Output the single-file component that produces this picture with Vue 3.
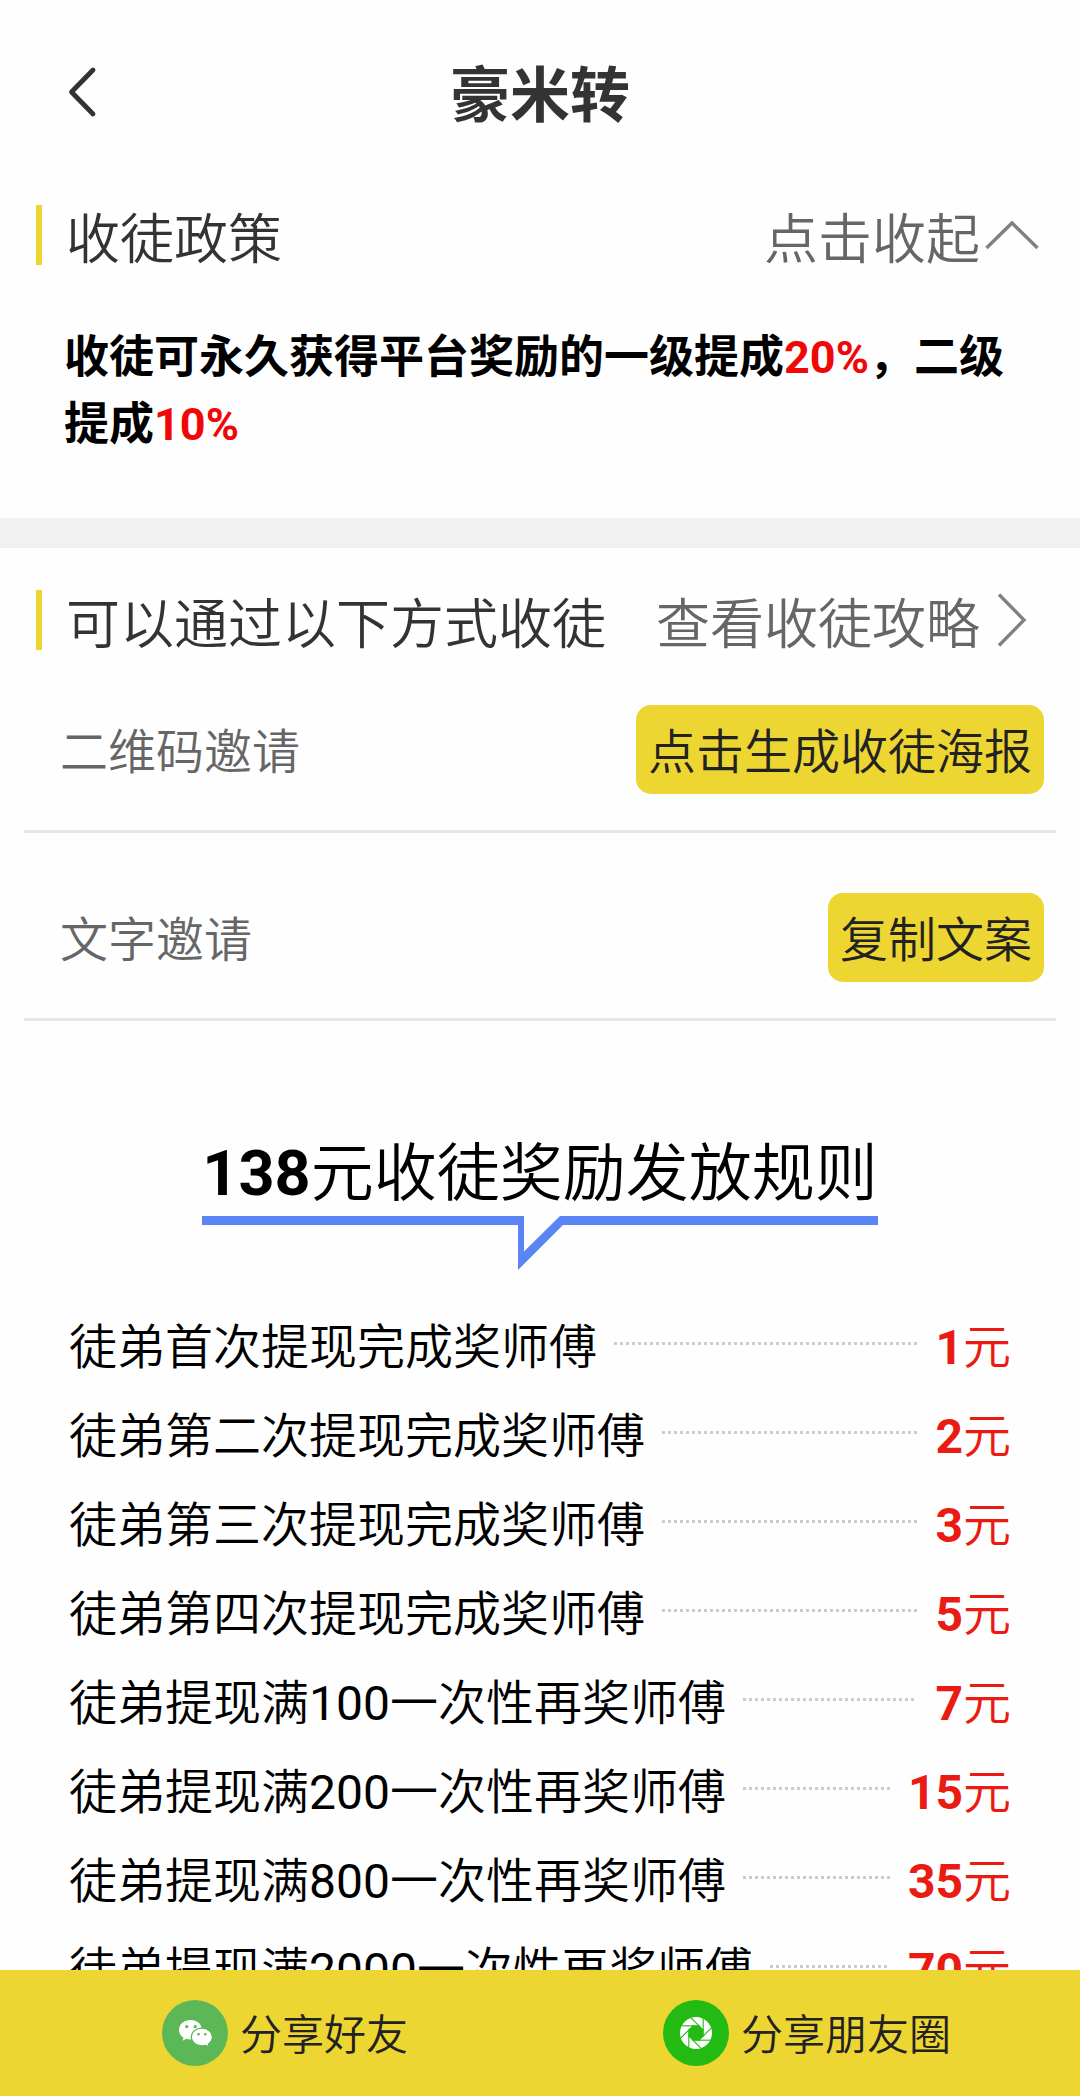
<template>
  <div class="page" lang="zh-CN">
    <main class="content">
      <header class="navbar">
        <svg class="back" viewBox="0 0 30 52" fill="none" stroke="#333" stroke-width="4.8" stroke-linecap="round" stroke-linejoin="round">
          <path d="M26 4 L4.500 26 L26 48" />
        </svg>
        <h1>豪米转</h1>
      </header>

      <section class="policy">
        <div class="section-head">
          <h2>收徒政策</h2>
          <div class="more">
            <span>点击收起</span>
            <svg class="arrow-up" viewBox="0 0 54 30" fill="none" stroke="#808080" stroke-width="3.4">
              <path d="M1.5 28 L27 3 L52.5 28" />
            </svg>
          </div>
        </div>
        <p class="policy-text">收徒可永久获得平台奖励的一级提成<em>20%</em>，二级提成<em>10%</em></p>
      </section>

      <div class="divider"></div>

      <section class="ways">
        <div class="section-head">
          <h2>可以通过以下方式收徒</h2>
          <div class="more">
            <span>查看收徒攻略</span>
            <svg class="arrow-right" viewBox="0 0 30 54" fill="none" stroke="#808080" stroke-width="3.4">
              <path d="M2 1.5 L27 27 L2 52.5" />
            </svg>
          </div>
        </div>
        <div v-for="way in ways" :key="way.label" class="way">
          <span class="way-label">{{ way.label }}</span>
          <button class="way-btn">{{ way.action }}</button>
        </div>
      </section>

      <section class="rules">
        <h3><b>138</b>元收徒奖励发放规则</h3>
        <svg class="underline" viewBox="0 0 676 54" fill="#5b84f5">
          <path d="M0 0 H322 V35.5 L358 0 H676 V9 H361 L316 54 V9 H0 Z" />
        </svg>
        <ul>
          <li v-for="(rule, index) in rules" :key="index">
            <span>{{ rule.text }}<span v-if="rule.limit" class="limit">{{ rule.limit }}</span>{{ rule.rest }}</span>
            <i class="dots"></i>
            <span class="reward"><b>{{ rule.amount }}</b>元</span>
          </li>
        </ul>
      </section>
    </main>

    <footer class="share-bar">
      <div class="share friend">
        <svg class="share-icon" viewBox="0 0 66 66">
          <circle cx="33" cy="33" r="33" fill="#5cb856" />
          <path fill="#fff" d="M28.5 20 C22 20 17 24.200 17 30 C17 33.200 18.700 35.800 21.400 37.600 L20.700 40.800 L24.400 38.800 C25.700 39.200 27 39.400 28.500 39.400 C35 39.400 40 35.500 40 30 C40 24.200 35 20 28.500 20 Z" />
          <path fill="#fff" stroke="#5cb856" stroke-width="1.200" d="M39.800 28.200 C34 28.200 29.300 32 29.300 37 C29.300 42 34 45.800 39.800 45.800 C41.200 45.800 42.500 45.600 43.700 45.200 L47.100 47.200 L46.300 44 C48.800 42.300 50.300 39.900 50.300 37 C50.300 32 45.600 28.200 39.800 28.200 Z" />
          <g fill="#5cb856">
            <circle cx="24.700" cy="26.600" r="1.600" />
            <circle cx="33.200" cy="26.600" r="1.600" />
            <circle cx="36.500" cy="34.300" r="1.300" />
            <circle cx="43.300" cy="34.300" r="1.300" />
          </g>
        </svg>
        <span>分享好友</span>
      </div>
      <div class="share moments">
        <svg class="share-icon" viewBox="0 0 66 66">
          <circle cx="33" cy="33" r="33" fill="#22ba13" />
          <circle cx="33" cy="33" r="16" fill="#fff" />
          <path fill="#22ba13" d="M30 25.800 H36 L40.200 30 V36 L36 40.200 H30 L25.800 36 V30 Z" />
          <!-- aperture blades -->
          <g stroke="#22ba13" stroke-width="1.100">
            <line v-for="n in 8" :key="n" x1="40.200" y1="36.500" x2="40.200" y2="18.500" :transform="`rotate(${n * 45} 33 33)`" />
          </g>
        </svg>
        <span>分享朋友圈</span>
      </div>
    </footer>
  </div>
</template>

<script setup>
const ways = [
  { label: '二维码邀请', action: '点击生成收徒海报' },
  { label: '文字邀请', action: '复制文案' }
]

const rules = [
  { text: '徒弟首次提现完成奖师傅', amount: 1 },
  { text: '徒弟第二次提现完成奖师傅', amount: 2 },
  { text: '徒弟第三次提现完成奖师傅', amount: 3 },
  { text: '徒弟第四次提现完成奖师傅', amount: 5 },
  { text: '徒弟提现满', limit: 100, rest: '一次性再奖师傅', amount: 7 },
  { text: '徒弟提现满', limit: 200, rest: '一次性再奖师傅', amount: 15 },
  { text: '徒弟提现满', limit: 800, rest: '一次性再奖师傅', amount: 35 },
  { text: '徒弟提现满', limit: 2000, rest: '一次性再奖师傅', amount: 70 }
]
</script>

<style>
body {
  margin: 0;
  background: #fefefe;
}
</style>

<style scoped>
.page {
  display: flex;
  flex-direction: column;
  height: 2096px;
  overflow: hidden;
  background: #fefefe;
  color: #000;
  font-family: Roboto, 'Noto Sans CJK SC', sans-serif;
}

h1, h2, h3, p, ul {
  margin: 0;
  padding: 0;
  font-weight: 400;
}

svg {
  display: block;
  flex: none;
}

.content {
  flex: 1;
  min-height: 0;
  overflow: hidden;
}

.navbar {
  display: grid;
  grid-template-columns: 160px 1fr 160px;
  height: 190px;
}

.back {
  width: 30px;
  height: 52px;
  margin: 66px 0 0 67px;
}

h1 {
  color: #333;
  font-size: 60px;
  font-weight: 700;
  line-height: 193px;
  text-align: center;
}

.policy {
  height: 313px;
  padding-top: 15px;
}

.section-head {
  display: flex;
  justify-content: space-between;
  height: 60px;
  margin-left: 36px;
  border-left: 6px solid #edd632;
  font-size: 54px;
  line-height: 71px;
  white-space: nowrap;
}

h2 {
  margin-left: 24px;
  color: #333;
  font-size: 54px;
  font-weight: 350;
}

.more {
  display: flex;
  color: #666;
  font-weight: 350;
}

.arrow-up {
  width: 54px;
  height: 30px;
  margin: 15px 41px 0 5px;
}

.arrow-right {
  width: 30px;
  height: 54px;
  margin: 3px 53px 0 17px;
}

.policy-text {
  padding: 60px 66px 0 64px;
  font-size: 45px;
  font-weight: 700;
  line-height: 66.5px;
}

.policy-text em {
  color: #f00808;
  font-style: normal;
}

.divider {
  height: 30px;
  background: #f1f1f1;
}

.ways {
  padding-top: 42px;
}

.way {
  display: flex;
  justify-content: space-between;
  margin: 0 24px;
  padding: 60px 12px 36px 36px;
  border-bottom: 3px solid #e6e6e6;
  font-size: 48px;
  font-weight: 350;
}

.section-head + .way {
  padding-top: 55px;
}

.way-label {
  height: 89px;
  color: #666;
  line-height: 95px;
}

.way-btn {
  height: 89px;
  padding: 7px 12px 0;
  border: 0;
  border-radius: 15px;
  background: #edd632;
  color: #222;
  font: inherit;
  line-height: 82px;
}

.rules {
  display: flex;
  flex-direction: column;
  align-items: center;
  padding-top: 118px;
}

h3 {
  font-size: 63px;
  font-weight: 350;
  line-height: 70px;
}

.underline {
  width: 676px;
  height: 54px;
  margin-top: 7px;
}

ul {
  align-self: stretch;
  margin: 33px 69px 0 69px;
  list-style: none;
}

li {
  display: flex;
  align-items: center;
  height: 89px;
  font-size: 48px;
  font-weight: 350;
  line-height: 89px;
  white-space: nowrap;
}

.limit {
  font-weight: 400;
}

.dots {
  flex: 1;
  height: 3px;
  margin: 0 18px 8px 17px;
  background: repeating-linear-gradient(90deg, #ccc 0 3px, transparent 3px 6px);
}

.reward {
  color: #e91b12;
}

.share-bar {
  display: flex;
  flex: none;
  height: 126px;
  background: #edd632;
}

.share {
  display: flex;
  gap: 12px;
  box-sizing: border-box;
  padding-top: 30px;
  color: #222;
  font-size: 42px;
  font-weight: 350;
  line-height: 71px;
}

.friend {
  width: 540px;
  padding-left: 162px;
}

.moments {
  padding-left: 123px;
}

.share-icon {
  width: 66px;
  height: 66px;
}
</style>
